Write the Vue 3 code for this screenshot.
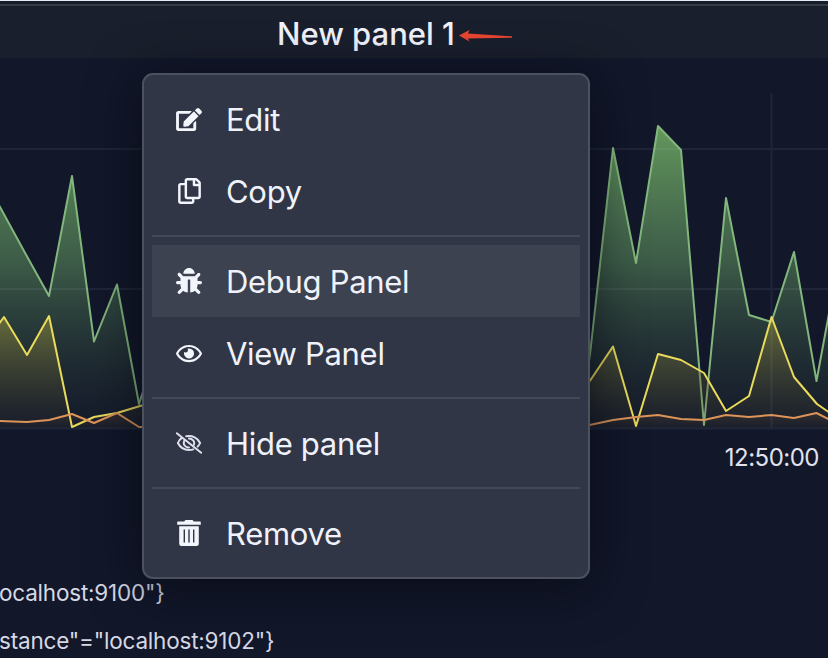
<script setup>
const groups = [
  [
    { id: 'edit', label: 'Edit' },
    { id: 'copy', label: 'Copy' },
  ],
  [
    { id: 'debug', label: 'Debug Panel', active: true },
    { id: 'view', label: 'View Panel' },
  ],
  [{ id: 'hide', label: 'Hide panel' }],
  [{ id: 'remove', label: 'Remove' }],
]

const icons = {
  edit: {
    box: '0 0 576 512', w: 26, h: 23,
    d: 'M402.6 83.2l90.2 90.2c3.8 3.8 3.8 10 0 13.8L274.4 405.6l-92.8 10.3c-12.4 1.4-22.9-9.1-21.5-21.5l10.3-92.8L388.8 83.2c3.8-3.8 10-3.8 13.8 0zm162-22.9l-48.8-48.8c-15.2-15.2-39.9-15.2-55.2 0l-35.4 35.4c-3.8 3.8-3.8 10 0 13.8l90.2 90.2c3.8 3.8 10 3.8 13.8 0l35.4-35.4c15.2-15.3 15.2-40 0-55.2zM384 346.2V448H64V128h229.8c3.2 0 6.2-1.3 8.5-3.5l40-40c7.6-7.6 2.2-20.5-8.5-20.5H48C21.5 64 0 85.5 0 112v352c0 26.5 21.5 48 48 48h352c26.5 0 48-21.5 48-48V306.2c0-10.7-12.9-16-20.5-8.5l-40 40c-2.2 2.3-3.5 5.3-3.5 8.5z',
  },
  copy: {
    box: '0 0 448 512', w: 23, h: 26,
    d: 'M433.941 65.941l-51.882-51.882A48 48 0 0 0 348.118 0H176c-26.51 0-48 21.49-48 48v48H48c-26.51 0-48 21.49-48 48v320c0 26.51 21.49 48 48 48h224c26.51 0 48-21.49 48-48v-48h80c26.51 0 48-21.49 48-48V99.882a48 48 0 0 0-14.059-33.941zM266 464H54a6 6 0 0 1-6-6V150a6 6 0 0 1 6-6h74v224c0 26.51 21.49 48 48 48h96v42a6 6 0 0 1-6 6zm128-96H182a6 6 0 0 1-6-6V54a6 6 0 0 1 6-6h106v88c0 13.255 10.745 24 24 24h88v202a6 6 0 0 1-6 6zm6-256h-64V48h9.632c1.591 0 3.117.632 4.243 1.757l48.368 48.368a6 6 0 0 1 1.757 4.243V112z',
  },
  debug: {
    box: '0 0 512 512', w: 26, h: 26,
    d: 'M511.988 288.9c-.478 17.43-15.217 31.1-32.653 31.1H424v16c0 21.864-4.882 42.584-13.6 61.145l60.228 60.228c12.496 12.497 12.496 32.758 0 45.255-12.498 12.497-32.759 12.496-45.256 0l-54.736-54.736C345.886 467.965 314.351 480 280 480V236c0-6.627-5.373-12-12-12h-24c-6.627 0-12 5.373-12 12v244c-34.351 0-65.886-12.035-90.636-32.108l-54.736 54.736c-12.498 12.497-32.759 12.496-45.256 0-12.496-12.497-12.496-32.758 0-45.255l60.228-60.228C92.882 378.584 88 357.864 88 336v-16H32.666C15.23 320 .491 306.33.013 288.9-.484 270.816 14.028 256 32 256h56v-58.745l-46.628-46.628c-12.496-12.497-12.496-32.758 0-45.255 12.498-12.497 32.758-12.497 45.256 0L141.255 160h229.489l54.627-54.627c12.498-12.497 32.758-12.497 45.256 0 12.496 12.497 12.496 32.758 0 45.255L424 197.255V256h56c17.972 0 32.484 14.816 31.988 32.9zM257 0c-61.856 0-112 50.144-112 112h224C369 50.144 318.856 0 257 0z',
  },
  view: {
    box: '0 0 576 512', w: 26, h: 23,
    d: 'M288 144a110.94 110.94 0 0 0-31.24 5 55.4 55.4 0 0 1 7.24 27 56 56 0 0 1-56 56 55.4 55.4 0 0 1-27-7.24A111.71 111.71 0 1 0 288 144zm284.52 97.4C518.29 135.59 410.93 64 288 64S57.68 135.64 3.48 241.41a32.35 32.35 0 0 0 0 29.19C57.71 376.41 165.07 448 288 448s230.32-71.64 284.52-177.41a32.35 32.35 0 0 0 0-29.19zM288 400c-98.65 0-189.09-55-237.93-144C98.91 167 189.34 112 288 112s189.09 55 237.93 144C477.1 345 386.66 400 288 400z',
  },
  hide: {
    box: '0 0 26 22', w: 26, h: 22, stroke: true,
    d: 'M.8 1.3L25.2 20.7M6.2 5.6C4.2 6.9 2.6 8.800 1.900 11c2.300 4.500 6.200 7 11.100 7 1.500 0 2.900-.2 4.200-.6M10.200 4.300c6.200-1.200 11.700 1.700 13.900 6.700-.5 1.300-1.300 2.500-2.400 3.500M8.300 8.600c-1.700 3.800 1 7 4.700 6.900M13 6.600c3.500.1 5.900 2.900 5 6',
  },
  remove: {
    box: '0 0 24 26', w: 24, h: 26,
    d: 'M8.500 0H15.500L16.800 1.500H23A.8.8 0 0 1 23.800 2.300V4.700H.2V2.300A.8.8 0 0 1 1 1.500H7.200ZM2.200 6.300H21.800V23.500A2.500 2.500 0 0 1 19.300 26H4.700A2.500 2.500 0 0 1 2.200 23.500ZM6.600 9.600V22.400H8V9.600ZM11.300 9.600V22.400H12.700V9.600ZM16 9.600V22.400H17.400V9.600Z',
  },
}

// Two visible runs of samples per series; the stretch between them lies under the menu.
const series = [
  {
    name: 'green',
    runs: [
      '-2,203 0,207 24,251 49,296 72,176 94,341.5 117,284.5 139,404 150,370',
      '585,390 590.5,350 613,148 636,263 658,126 681,150 704,425 726,198 749,315 771.5,322 794,252 816.5,381 830,308',
    ],
  },
  {
    name: 'yellow',
    runs: [
      '-2,325 4,317 27,355 49,316 72,427 94,417 117,413 150,403',
      '585,387 590.5,380 613,346.5 636,426 658,354 681,360 704,373 726,411 749,396 771.5,317 794,377 817,404 830,413',
    ],
  },
  {
    name: 'orange',
    runs: [
      '-2,421 27,422 49,420 72,414 94,423 117,413 139,427 150,427',
      '585,426 613,420 636,417 658,415 681,419 704,420 726,415 749,417 771.5,415 794,418 816.5,413 830,420',
    ],
  },
]

const area = (run) => {
  const pts = run.split(' ')
  return `${pts[0].split(',')[0]},428 ${run} ${pts[pts.length - 1].split(',')[0]},428`
}
</script>

<template>
  <main class="panel">
    <header class="header">
      <h1 class="title">New panel 1</h1>
      <svg class="arrow" width="53" height="14" viewBox="0 0 53 14">
        <path d="M0 6.500L10.500 1L9 4.600L53 7.300V8.800L9 9.400L10.500 12.500Z" />
      </svg>
    </header>

    <svg class="chart" width="828" height="382" viewBox="0 58 828 382">
      <defs>
        <linearGradient id="fill-green" gradientUnits="userSpaceOnUse" x1="0" y1="126" x2="0" y2="428">
          <stop offset="0" stop-color="#64985d" />
          <stop offset="0.45" stop-color="#517c56" stop-opacity="0.68" />
          <stop offset="1" stop-color="#2b3c36" stop-opacity="0.1" />
        </linearGradient>
        <linearGradient id="fill-yellow" gradientUnits="userSpaceOnUse" x1="0" y1="316" x2="0" y2="428">
          <stop offset="0" stop-color="#80803a" stop-opacity="0.7" />
          <stop offset="1" stop-color="#40382c" stop-opacity="0.1" />
        </linearGradient>
        <linearGradient id="fill-orange" gradientUnits="userSpaceOnUse" x1="0" y1="412" x2="0" y2="428">
          <stop offset="0" stop-color="#a06b3c" stop-opacity="0.15" />
          <stop offset="1" stop-color="#a06b3c" stop-opacity="0" />
        </linearGradient>
      </defs>
      <template v-for="s in series" :key="s.name">
        <g v-for="run in s.runs" :key="run">
          <polygon :points="area(run)" :fill="`url(#fill-${s.name})`" />
          <polyline :class="['line', s.name]" :points="run" />
        </g>
      </template>
      <path class="grid" d="M0 149H828M0 289H828M0 428.5H828M771.5 93V428" />
    </svg>

    <div class="axis"><span>12:50:00</span></div>

    <ul class="legend">
      <li>ocalhost:9100"}</li>
      <li>stance"="localhost:9102"}</li>
    </ul>

    <nav class="menu">
      <ul v-for="(group, i) in groups" :key="i" class="group">
        <li v-for="item in group" :key="item.id" :class="['item', { active: item.active }]">
          <span class="icon">
            <svg
              :width="icons[item.id].w"
              :height="icons[item.id].h"
              :viewBox="icons[item.id].box"
              :class="{ outline: icons[item.id].stroke }"
            >
              <path fill-rule="evenodd" :d="icons[item.id].d" />
            </svg>
          </span>
          <span class="label">{{ item.label }}</span>
        </li>
      </ul>
    </nav>
  </main>
</template>

<style>
body {
  margin: 0;
  background: #12172a;
}
</style>

<style scoped>
.panel {
  position: relative;
  width: 828px;
  height: 658px;
  overflow: hidden;
  box-sizing: border-box;
  background: #12172a;
  color: #d6d9e4;
  font-family: Inter, "Liberation Sans", sans-serif;
  border-top: 1px solid #e4edf3;
}
.header {
  display: flex;
  box-sizing: border-box;
  height: 57px;
  padding: 10px 0 0 277px;
  background: linear-gradient(#171c2a 3px, #363b48 3px, #363b48 5px, #1a1f2d 5px);
}
.title {
  margin: 0;
  width: 182px;
  font-size: 31px;
  font-weight: 500;
  line-height: 46px;
  white-space: nowrap;
  color: #f1f3fc;
}
.arrow {
  margin-top: 18px;
  fill: #ea4632;
}
.chart {
  display: block;
}
.line {
  fill: none;
  stroke-width: 2;
  stroke-linejoin: round;
}
.green { stroke: #83b67c; }
.yellow { stroke: #eadb5b; }
.orange { stroke: #dc9458; }
.grid {
  fill: none;
  stroke: rgba(190, 205, 230, 0.08);
  stroke-width: 2;
}
.axis {
  display: flex;
  justify-content: flex-end;
  height: 36px;
  padding-right: 9px;
  font-size: 24px;
  line-height: 36px;
  letter-spacing: -0.5px;
  color: #e0e3ee;
}
.legend {
  list-style: none;
  margin: 0 0 0 -1px;
  padding: 93px 0 0;
  font-size: 22.5px;
  letter-spacing: -0.2px;
  line-height: 48px;
  white-space: nowrap;
}
.legend li {
  height: 48px;
}
.menu {
  position: absolute;
  left: 142px;
  top: 72px;
  width: 448px;
  height: 506px;
  box-sizing: border-box;
  padding: 8px;
  border: 2px solid #4b515f;
  border-radius: 11px;
  background: #303645;
  box-shadow: 0 8px 52px rgba(5, 9, 16, 0.7);
}
.group {
  list-style: none;
  margin: 0;
  padding: 0;
}
.group + .group {
  margin-top: 8px;
  padding-top: 8px;
  border-top: 2px solid #434958;
}
.item {
  display: flex;
  align-items: center;
  height: 72px;
  padding-left: 24px;
}
.item.active {
  background: #3c4250;
}
.icon {
  display: flex;
  justify-content: center;
  width: 26px;
  margin-right: 24px;
}
.icon svg {
  fill: #f3f5fd;
}
.icon svg.outline {
  fill: none;
  stroke: #dfe2ed;
  stroke-width: 2;
  stroke-linecap: round;
}
.label {
  padding-top: 2px;
  font-size: 31px;
  line-height: 40px;
  letter-spacing: -0.3px;
  white-space: nowrap;
  color: #f0f2fb;
}
</style>
